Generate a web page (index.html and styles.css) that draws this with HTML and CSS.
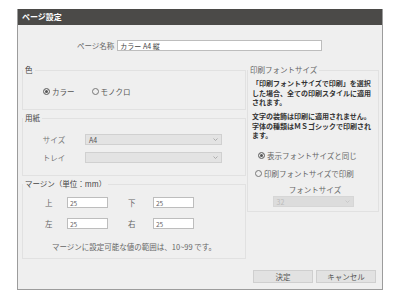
FILE: index.html
```html
<!DOCTYPE html>
<html lang="ja">

<head>
    <meta charset="UTF-8">
    <meta name="viewport" content="width=device-width, initial-scale=1.0">
    <title>ページ設定</title>
    <link rel="stylesheet" href="styles.css">
</head>

<body>
    <div class="dialog">
        <div class="titlebar">ページ設定</div>
        <div class="dialog-body">
            <div class="name-row">
                <span class="name-label">ページ名称</span>
                <input class="text-input name-input" type="text" value="カラー A4 縦">
            </div>

            <div class="columns">
                <div class="left-col">
                    <fieldset class="group">
                        <legend>色</legend>
                        <div class="color-row">
                            <span class="radio checked"></span><span class="radio-text">カラー</span>
                            <span class="radio"></span><span class="radio-text">モノクロ</span>
                        </div>
                    </fieldset>

                    <fieldset class="group paper-group">
                        <legend>用紙</legend>
                        <div class="paper-grid">
                            <span class="row-label">サイズ</span>
                            <div class="select">
                                <span>A4</span>
                                <svg class="chevron" width="5" height="3" viewBox="0 0 5 3"><polyline points="0.5,0.5 2.5,2.5 4.5,0.5" /></svg>
                            </div>
                            <span class="row-label">トレイ</span>
                            <div class="select">
                                <span></span>
                                <svg class="chevron" width="5" height="3" viewBox="0 0 5 3"><polyline points="0.5,0.5 2.5,2.5 4.5,0.5" /></svg>
                            </div>
                        </div>
                    </fieldset>

                    <fieldset class="group margin-group">
                        <legend>マージン（単位：mm）</legend>
                        <div class="margin-grid">
                            <span>上</span>
                            <input class="text-input margin-input" type="text" value="25">
                            <span></span>
                            <span>下</span>
                            <input class="text-input margin-input" type="text" value="25">

                            <span>左</span>
                            <input class="text-input margin-input" type="text" value="25">
                            <span></span>
                            <span>右</span>
                            <input class="text-input margin-input" type="text" value="25">
                        </div>
                        <p class="margin-note">マージンに設定可能な値の範囲は、10~99 です。</p>
                    </fieldset>
                </div>

                <fieldset class="group font-group">
                    <legend class="font-legend">印刷フォントサイズ</legend>
                    <div class="font-body">
                        <p class="notice">「印刷フォントサイズで印刷」を選択<br>した場合、全ての印刷スタイルに適用<br>されます。</p>
                        <p class="notice second">文字の装飾は印刷に適用されません。<br>字体の種類はＭＳゴシックで印刷され<br>ます。</p>

                        <div class="font-radio first">
                            <span class="radio checked"></span><span class="radio-text">表示フォントサイズと同じ</span>
                        </div>
                        <div class="font-radio">
                            <span class="radio"></span><span class="radio-text">印刷フォントサイズで印刷</span>
                        </div>

                        <div class="size-label">フォントサイズ</div>
                        <div class="select disabled size-select">
                            <span>32</span>
                            <svg class="chevron" width="5" height="3" viewBox="0 0 5 3"><polyline points="0.5,0.5 2.5,2.5 4.5,0.5" /></svg>
                        </div>
                    </div>
                </fieldset>
            </div>

            <div class="buttons">
                <button class="btn">決定</button>
                <button class="btn">キャンセル</button>
            </div>
        </div>
    </div>
</body>

</html>
```

FILE: styles.css
```css
body {
    margin: 0;
    padding: 9px 0 0 17px;
    background: #fff;
    font-family: "Noto Sans CJK JP", "Noto Sans", sans-serif;
    font-size: 7.5px;
    color: #555;
}

.dialog {
    width: 364px;
    border: 1px solid #9c9c9c;
    border-top: none;
}

.titlebar {
    height: 16px;
    line-height: 16px;
    padding-left: 4px;
    background: #4b4a48;
    color: #fff;
    font-size: 8px;
    font-weight: bold;
}

.dialog-body {
    height: 264px;
    box-sizing: border-box;
    padding: 15px 3px 6px 4px;
    background: #efefef;
    display: flex;
    flex-direction: column;
}

/* page name */
.name-row {
    display: flex;
    align-items: center;
    gap: 3px;
    height: 11px;
    padding-left: 55px;
}

.name-label {
    color: #666;
}

.text-input {
    box-sizing: border-box;
    height: 11px;
    margin: 0;
    padding: 0 2px;
    border: 1px solid #bdbdbd;
    background: #fff;
    font-family: inherit;
    font-size: 7px;
    color: #444;
    outline: none;
}

.name-input {
    width: 205px;
}

/* two columns */
.columns {
    display: flex;
    align-items: flex-start;
    gap: 1px;
    margin-top: 14px;
}

.left-col {
    width: 224px;
    display: flex;
    flex-direction: column;
    gap: 3px;
}

.group {
    margin: 0;
    padding: 0;
    min-width: 0;
    border: 1px solid #e1e1e1;
}

.group legend {
    padding: 0 2px;
    line-height: 10px;
    color: #444;
}

/* radios */
.radio {
    display: inline-block;
    width: 5px;
    height: 5px;
    border: 1px solid #777;
    border-radius: 50%;
}

.radio.checked {
    background: #555;
    box-shadow: inset 0 0 0 1px #efefef;
}

.radio-text {
    margin-left: 2px;
}

.color-row {
    display: flex;
    align-items: center;
    height: 10px;
    padding: 11px 0 13px 20px;
}

.color-row .radio-text:nth-child(2) {
    margin-right: 17px;
}

/* paper */
.paper-grid {
    display: grid;
    grid-template-columns: 24px 137px;
    column-gap: 19px;
    row-gap: 7px;
    align-items: center;
    padding: 11px 0 12px 19px;
}

.row-label {
    text-align: center;
    color: #777;
}

.select {
    box-sizing: border-box;
    height: 11px;
    padding: 0 3px;
    border: 1px solid #d0d0d0;
    background: #e3e3e3;
    display: flex;
    align-items: center;
    justify-content: space-between;
    font-size: 7px;
    color: #555;
}

.chevron polyline {
    fill: none;
    stroke: #a0a0a0;
    stroke-width: 0.8;
}

/* margins */
.margin-grid {
    display: grid;
    grid-template-columns: 22px 41px 20px 25px 41px;
    row-gap: 10px;
    align-items: center;
    padding: 8px 0 0 22px;
    color: #666;
}

.margin-input {
    width: 41px;
    font-size: 6.5px;
    color: #666;
}

.margin-note {
    margin: 13px 0 6px;
    line-height: 10px;
    text-align: center;
    color: #666;
}

/* print font size */
.font-group {
    width: 132px;
    box-sizing: border-box;
}

.group .font-legend {
    color: #666;
}

.font-body {
    padding: 4px 0 4px 4px;
}

.notice {
    margin: 0;
    font-size: 7px;
    line-height: 9.5px;
    font-weight: bold;
    color: #333;
    white-space: nowrap;
}

.notice.second {
    margin-top: 4.5px;
}

.font-radio {
    display: flex;
    align-items: center;
    height: 10px;
    margin-top: 8px;
    padding-left: 3px;
    color: #666;
}

.font-radio.first {
    margin-top: 9.5px;
    padding-left: 6px;
}

.size-label {
    margin-top: 7px;
    line-height: 10px;
    text-align: center;
    color: #666;
}

.size-select {
    width: 81px;
    margin: 1px auto 0;
    position: relative;
    left: -2px;
}

.select.disabled {
    background: #dcdcdc;
    border-color: #d6d6d6;
    color: #bbb;
}

.select.disabled .chevron polyline {
    stroke: #c4c4c4;
}

/* buttons */
.buttons {
    margin-top: auto;
    padding-right: 3px;
    display: flex;
    justify-content: flex-end;
    gap: 3px;
}

.btn {
    width: 60px;
    height: 13px;
    padding: 0;
    border: 1px solid #cfcfcf;
    background: #e2e2e2;
    font-family: inherit;
    font-size: 7.5px;
    color: #555;
}
```
